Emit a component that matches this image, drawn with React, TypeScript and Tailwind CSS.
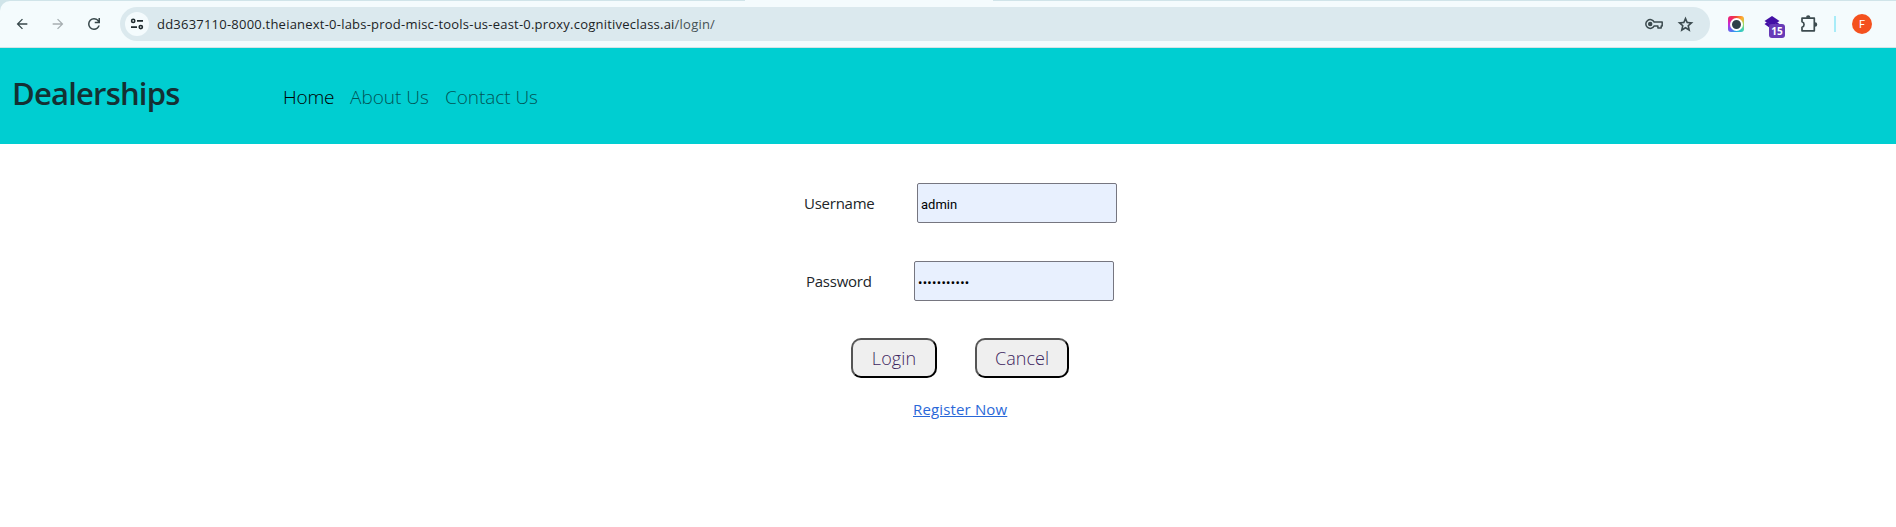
const ui = "font-['Open_Sans','Noto_Sans',sans-serif]";

function ToolbarIcon({ d, className }: { d: string; className: string }) {
  return (
    <svg viewBox="0 0 24 24" className={className} fill="currentColor" aria-hidden="true">
      <path d={d} />
    </svg>
  );
}

function BrowserBar() {
  return (
    <div className="h-12 bg-[#d0e4e9]">
      <div className="flex h-px">
        <div className="ml-[745px] w-[248px] bg-[#f4fbfd]" />
      </div>
      <div className="flex h-[47px] items-center rounded-tl-[10px] border-b border-[#d5e3e6] bg-[#f4fbfd] pl-[14px]">
        <ToolbarIcon className="h-4 w-4 text-[#37474a]" d="M7.8 13.1 13.4 18.6 12 20 4 12l8-8 1.4 1.4-5.6 5.5H20v2.2z" />
        <ToolbarIcon className="ml-[20px] h-4 w-4 text-[#a6aeb1]" d="M16.2 13.1H4v-2.2h12.2l-5.6-5.5L12 4l8 8-8 8-1.4-1.4z" />
        <ToolbarIcon className="ml-[19px] h-[18px] w-[18px] text-[#37474a]" d="M12 20q-3.35 0-5.675-2.325T4 12q0-3.35 2.325-5.675T12 4q1.725 0 3.3.713T18 6.75V4h2v7h-7V9h4.2q-.8-1.4-2.188-2.2T12 6Q9.5 6 7.75 7.75T6 12q0 2.5 1.75 4.25T12 18q1.925 0 3.475-1.1T17.65 14h2.1q-.7 2.65-2.85 4.325T12 20z" />
        <div className="ml-[17px] flex h-[34px] w-[1590px] items-center rounded-full bg-[#dbe9ee] pl-[5px] pr-[15px]">
          <div className="flex h-6 w-6 items-center justify-center rounded-full bg-[#f4fbfd]">
            <svg viewBox="0 0 14 12" className="h-3 w-[14px]" fill="none" stroke="#1f2b2e" strokeWidth="1.6" aria-hidden="true">
              <circle cx="3.2" cy="2.9" r="1.6" />
              <path d="M7 2.9h6M1 9.1h6" />
              <circle cx="10.8" cy="9.1" r="1.6" />
            </svg>
          </div>
          <span className={`ml-2 whitespace-nowrap text-[13px] leading-5 tracking-[0.22px] text-[#1b2426] ${ui}`}>
            dd3637110-8000.theianext-0-labs-prod-misc-tools-us-east-0.proxy.cognitiveclass.ai<span className="text-[#465255]">/login/</span>
          </span>
          <svg viewBox="0 0 18 12" className="ml-auto h-3 w-[18px]" fill="none" stroke="#3c4b4f" strokeWidth="1.5" aria-hidden="true">
            <path d="M9.2 4.1A4.4 4.4 0 1 0 9.2 7.9H12.9V10.1H16.2V7.9H17.2V4.1Z" strokeLinejoin="round" />
            <circle cx="5.2" cy="6" r="1.5" fill="#3c4b4f" />
          </svg>
          <ToolbarIcon className="ml-[13px] h-[19px] w-[19px] text-[#3c4b4f]" d="m8.85 16.825 3.15-1.9 3.15 1.925-.825-3.6 2.775-2.4-3.65-.325-1.45-3.4-1.45 3.375-3.65.325 2.775 2.425zM5.825 21l1.625-7.025L2 9.25l7.2-.625L12 2l2.8 6.625 7.2.625-5.45 4.725L18.175 21 12 17.275z" />
        </div>
        <div className="ml-[18px] flex h-4 w-4 items-center justify-center rounded-[3px] bg-[conic-gradient(#f04438,#ffad30_45deg,#9bdc63_90deg,#3fd0b6_135deg,#22a7ee_180deg,#6a62ed_225deg,#c727d6_270deg,#ee246e_315deg,#f04438)]">
          <div className="h-[13px] w-[13px] rounded-full border-2 border-white bg-[#304149]" />
        </div>
        <div className="relative ml-5 h-4 w-4">
          <svg viewBox="0 0 16 16" className="h-4 w-4" fill="#4310a5" aria-hidden="true">
            <path d="M8 0 15.5 5 8 10 .5 5Z" />
            <path d="M.5 8 3 6.3 8 9.7 13 6.3 15.5 8 8 13.5Z" />
          </svg>
          <span className={`absolute left-[5px] top-2 flex h-[14px] w-4 items-center justify-center rounded-[3px] bg-[#673ab7] text-[10px] font-bold leading-none text-white ${ui}`}>15</span>
        </div>
        <svg viewBox="0 0 18 18" className="ml-5 h-[18px] w-[18px]" fill="none" stroke="#3c4b4f" strokeWidth="1.7" strokeLinejoin="round" aria-hidden="true">
          <path d="M2 3.2H14.3V15.8H2V12.2A2.8 2.8 0 0 0 2 6.8Z" />
          <path d="M6.5 2.8a1.6 1.6 0 0 1 3.2 0zM14.7 7.8a1.6 1.6 0 0 1 0 3.2z" fill="#3c4b4f" stroke="none" />
          <path d="M6.9 2.4a1.3 1.3 0 0 1 2.6 0M15 8a1.3 1.3 0 0 1 0 2.8" />
        </svg>
        <div className="ml-4 h-4 w-[2px] bg-[#a8ecf8]" />
        <div className="ml-4 flex h-5 w-5 items-center justify-center rounded-full bg-[#f4511e] font-[Roboto,sans-serif] text-[11px] leading-none text-white">F</div>
      </div>
    </div>
  );
}

function NavBar() {
  return (
    <nav className="flex h-24 items-start bg-[#00ced1] pl-3">
      <a className="w-[271px] pt-[22px] text-[31px] font-semibold leading-[46px] tracking-[-0.8px] text-[#143033]">Dealerships</a>
      <div className="flex gap-4 pt-[34px] text-[19px] font-light leading-[30px] text-[#005557]">
        <a className="w-[51px] whitespace-nowrap tracking-[-0.2px] text-black">Home</a>
        <a className="w-[79px] whitespace-nowrap tracking-[0px]">About Us</a>
        <a className="whitespace-nowrap tracking-[-0.05px]">Contact Us</a>
      </div>
    </nav>
  );
}

const field =
  "h-10 w-[200px] rounded-[2px] border border-[#767680] bg-[#e8f0fe] pl-[3px] pr-[2px] pt-[2px] text-[13px] text-black outline-none";
const button =
  "h-10 rounded-[10px] border-2 border-t-[#555] border-l-[#555] border-r-black border-b-black bg-[#efefef] text-[18px] font-light leading-[34px] text-[#3d2560]";

export default function App() {
  return (
    <div className={`h-[527px] overflow-hidden bg-white text-[15px] text-[#212529] ${ui}`}>
      <BrowserBar />
      <NavBar />
      <form className="flex flex-col pt-[39px]">
        <div className="flex items-center pl-[804px]">
          <label className="w-[113px] leading-6 tracking-[-0.25px]">Username</label>
          <input className={`${field} pl-[2px] font-[Roboto,sans-serif]`} defaultValue="admin" />
        </div>
        <div className="mt-[38px] flex items-center pl-[806px]">
          <label className="w-[108px] leading-6 tracking-[-0.25px]">Password</label>
          <input type="password" autoComplete="off" className={`${field} font-[Roboto,sans-serif] tracking-[0.3px]`} defaultValue="abcdefghijk" />
        </div>
        <div className="mt-[37px] flex gap-[38px] pl-[851px]">
          <button type="button" className={`w-[86px] ${button} tracking-[0.1px]`}>Login</button>
          <button type="button" className={`w-[94px] ${button} tracking-[0.05px]`}>Cancel</button>
        </div>
        <a className="mt-[19px] self-start pl-[913px] leading-6"><span className="tracking-[0.15px] text-[#2a68d8] underline">Register Now</span></a>
      </form>
    </div>
  );
}
